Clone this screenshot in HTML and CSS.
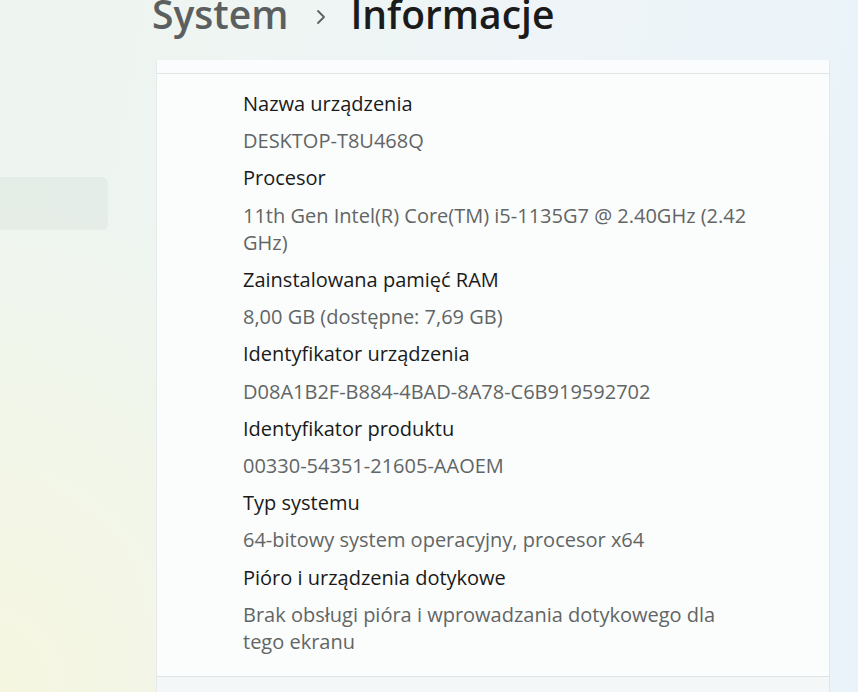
FILE: index.html
```
<!DOCTYPE html>
<html lang="pl">
<head>
<meta charset="utf-8">
<title>System › Informacje</title>
<link rel="stylesheet" href="styles.css">
</head>
<body>
<div class="window">
  <nav class="sidebar">
    <div class="nav-item selected"></div>
  </nav>
  <main class="content">
    <h1 class="breadcrumb">
      <span class="crumb-parent">System</span>
      <svg class="chevron" width="14" height="16" viewBox="0 0 14 16"><path d="M4 2 L10 8 L4 14" fill="none" stroke="#5b6060" stroke-width="1.8" stroke-linecap="round" stroke-linejoin="round"/></svg>
      <span class="crumb-current">Informacje</span>
    </h1>
    <section class="card-stack">
      <div class="card-prev"></div>
      <div class="card">
        <dl class="specs">
          <div class="spec"><dt>Nazwa urządzenia</dt><dd>DESKTOP-T8U468Q</dd></div>
          <div class="spec"><dt>Procesor</dt><dd>11th Gen Intel(R) Core(TM) i5-1135G7 @ 2.40GHz (2.42 GHz)</dd></div>
          <div class="spec"><dt>Zainstalowana pamięć RAM</dt><dd>8,00 GB (dostępne: 7,69 GB)</dd></div>
          <div class="spec"><dt>Identyfikator urządzenia</dt><dd>D08A1B2F-B884-4BAD-8A78-C6B919592702</dd></div>
          <div class="spec"><dt>Identyfikator produktu</dt><dd>00330-54351-21605-AAOEM</dd></div>
          <div class="spec"><dt>Typ systemu</dt><dd>64-bitowy system operacyjny, procesor x64</dd></div>
          <div class="spec"><dt>Pióro i urządzenia dotykowe</dt><dd>Brak obsługi pióra i wprowadzania dotykowego dla tego ekranu</dd></div>
        </dl>
      </div>
      <div class="card-next"></div>
    </section>
  </main>
</div>
</body>
</html>
```
FILE: styles.css
```
html, body {
  margin: 0;
  padding: 0;
  height: 100%;
  overflow: hidden;
}
body {
  font-family: "Open Sans", "Noto Sans", sans-serif;
  background:
    radial-gradient(ellipse 420px 520px at 0% 100%, rgba(246,246,222,0.9) 0%, rgba(246,246,222,0) 100%),
    linear-gradient(100deg, #eef5f0 0%, #eef5f2 25%, #eef4f8 60%, #e9f3f9 100%);
}
.window {
  display: flex;
  height: 692px;
}
.sidebar {
  width: 152px;
  flex: none;
  padding-top: 177px;
  box-sizing: border-box;
}
.nav-item {
  height: 53px;
  width: 118px;
  margin-left: -10px;
  border-radius: 6px;
}
.nav-item.selected {
  background: rgba(0, 40, 20, 0.035);
}
.content {
  flex: 1;
  display: flex;
  flex-direction: column;
}
.breadcrumb {
  margin: -10px 0 0 0;
  height: 48px;
  display: flex;
  align-items: center;
  font-size: 39px;
  line-height: 48px;
  font-weight: 600;
  letter-spacing: 0;
}
.crumb-parent {
  color: #5b5f60;
}
.chevron {
  margin: 6px 22px 0 26px;
}
.crumb-current {
  color: #1b1b1b;
}
.card-stack {
  margin-top: 22px;
  margin-left: 4px;
  width: 674px;
  display: flex;
  flex-direction: column;
}
.card-prev {
  height: 13px;
  background: #fafcfd;
  border-left: 1px solid #e6eaea;
  border-right: 1px solid #e3e7e9;
  border-bottom: 1px solid #e1e4e6;
}
.card {
  background: #fbfdfc;
  border-left: 1px solid #e6eaea;
  border-right: 1px solid #e3e7e9;
  border-bottom: 1px solid #e1e4e6;
  padding: 16px 20px 21px 86px;
}
.card-next {
  height: 20px;
  background: #f4f7f7;
  border-left: 1px solid #e6eaea;
  border-right: 1px solid #e3e7e9;
}
.specs {
  margin: 0;
  display: flex;
  flex-direction: column;
  gap: 10px;
  max-width: 510px;
}
.spec {
  display: flex;
  flex-direction: column;
  gap: 10px;
}
.spec dt, .spec dd {
  margin: 0;
  font-size: 20px;
  line-height: 27.2px;
}
.spec dt {
  color: #1a1a1a;
}
.spec dd {
  color: #626565;
}
```
